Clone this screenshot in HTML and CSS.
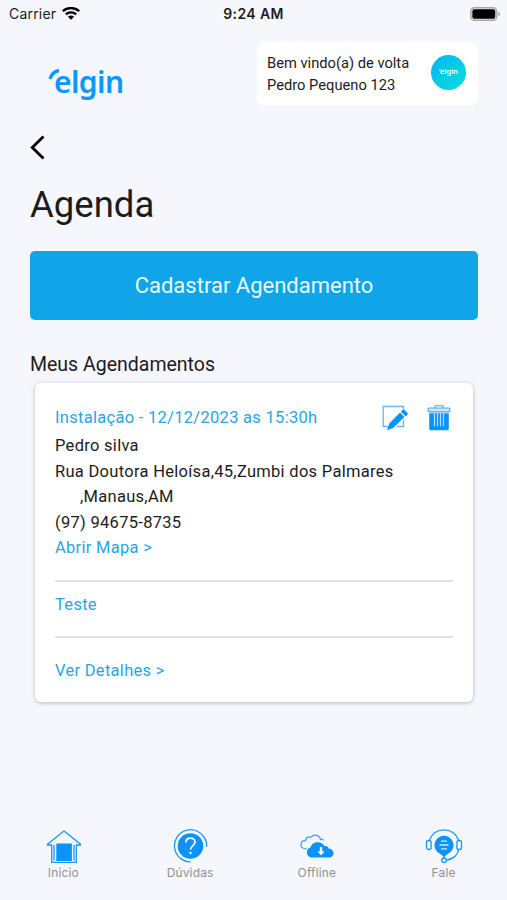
FILE: index.html
```html
<!DOCTYPE html>
<html lang="pt-br">
<head>
	<meta charset="utf-8">
	<title>Agenda</title>
	<link rel="stylesheet" href="styles.css">
</head>
<body>
	<div class="app">
		<div class="status">
			<div class="carrier">
				<span>Carrier</span>
				<svg width="18" height="14" viewBox="0 0 18 14" fill="none" stroke="#000" stroke-width="2.4">
					<path d="M.8 4.200C5.3 0 12.700 0 17.200 4.200"/>
					<path d="M3.800 7.400c2.900-2.700 7.500-2.700 10.400 0"/>
					<path d="M9 12.800L5.900 9.700c1.700-1.600 4.500-1.600 6.200 0z" fill="#000" stroke="none"/>
				</svg>
			</div>
			<span class="time">9:24 AM</span>
			<svg class="battery" width="31" height="14" viewBox="0 0 31 14">
				<rect x=".8" y=".6" width="26" height="12.8" rx="3.6" fill="#d8d8da" stroke="#a6a6a9" stroke-width="1.2"/>
				<rect x="2.4" y="2.3" width="22.8" height="9.4" rx="2" fill="#000"/>
				<path d="M28.3 4.7c2.2.7 2.2 3.9 0 4.6z" fill="#a6a6a9"/>
			</svg>
		</div>
		<div class="header">
			<div class="logo">
				<svg width="12" height="12" viewBox="0 0 12 12" fill="none" stroke="#0c98fd" stroke-width="3.400">
					<path d="M2.200 11C3 7 6.500 3.500 11 2.500"/>
				</svg>
				<span>elgin</span>
			</div>
			<div class="welcome">
				<p>Bem vindo(a) de volta<br>Pedro Pequeno 123</p>
				<div class="avatar">&#8217;elgin</div>
			</div>
		</div>
		<div class="content">
			<svg class="back" width="16" height="26" viewBox="0 0 16 26" fill="none" stroke="#000" stroke-width="2.8">
				<path d="M13.500 1.500L2.300 12.500l11.200 11"/>
			</svg>
			<h1>Agenda</h1>
			<button class="cadastrar">Cadastrar Agendamento</button>
			<h2>Meus Agendamentos</h2>
			<div class="card">
				<div class="card-top">
					<span class="link">Instalação - 12/12/2023 as 15:30h</span>
					<div class="actions">
						<svg width="27" height="26" viewBox="0 0 27 26">
							<path d="M7 21.500H1.200V1.500h20.300V4M21.500 15v6.500H15" fill="none" stroke="#5db8fb" stroke-width="1.3"/>
							<path d="M5 25.200l2.300-6.700L18 7.600l4.400 4.400L11.500 22.800z" fill="#0c93fb"/>
							<path d="M18.800 6.700l2-2q.8-.7 1.600 0l3.200 3.200q.7.700 0 1.500l-2 2z" fill="#0c93fb"/>
						</svg>
						<svg width="24" height="26" viewBox="0 0 24 26">
							<path d="M8 3V1.600q0-1 1-1h6q1 0 1 1V3" fill="none" stroke="#5db8fb" stroke-width="1.3"/>
							<rect x="1.100" y="3" width="21.800" height="3.800" rx="1" fill="#cbe8fe" stroke="#3daafb" stroke-width="1.200"/>
							<path d="M2.200 8.300h19.600v15.500q0 1.400-1.400 1.400H3.600q-1.400 0-1.400-1.400z" fill="#0c93fb"/>
							<path d="M7.500 8.300v13M10.500 8.300v13M13.500 8.300v13M16.500 8.300v13" stroke="#b5defd" stroke-width="1.200"/>
						</svg>
					</div>
				</div>
				<p>Pedro silva</p>
				<p>Rua Doutora Heloísa,45,Zumbi dos Palmares</p>
				<p class="city">,Manaus,AM</p>
				<p>(97) 94675-8735</p>
				<p class="link">Abrir Mapa &gt;</p>
				<hr>
				<p class="link">Teste</p>
				<hr class="second">
				<p class="link">Ver Detalhes &gt;</p>
			</div>
		</div>
		<div class="tabs">
			<div class="tab">
				<svg width="36" height="36" viewBox="0 0 36 36" fill="none" stroke="#1597fb" stroke-width="1.300">
					<path d="M2.500 16.300L19 3.100l16.500 13.200v.7h-4.200v17.300H6.700V17H2.500z"/>
					<path d="M9 17v15.500M29 17v15.500"/>
					<path d="M11.300 15.500h15.600V33H11.300z" fill="#0c93fb" stroke="none"/>
				</svg>
				<span>Inicio</span>
			</div>
			<div class="tab">
				<svg width="36" height="36" viewBox="0 0 36 36" fill="none" stroke="#1597fb" stroke-width="1.300">
					<circle cx="18.500" cy="18" r="12.800" fill="#0c93fb" stroke="none"/>
					<path d="M7.500 6A16.300 16.300 0 0 1 34.800 18.700"/>
					<path d="M18.500 34A16.200 16.200 0 0 1 7.500 6"/>
					<path d="M14 14.500c0-5.800 9-5.600 9-.4 0 3.900-4.500 3.600-4.500 7.400" stroke="#fff" stroke-width="1.700"/>
					<circle cx="18.500" cy="25" r="1.200" fill="#fff" stroke="none"/>
				</svg>
				<span>Dúvidas</span>
			</div>
			<div class="tab">
				<svg width="36" height="36" viewBox="0 0 36 36" fill="none" stroke="#39a7fb" stroke-width="1.300">
					<path d="M7.500 20.500C3 21 1.500 18.500 2 16c.4-2.200 2.300-3.600 4.500-3.300C6.500 9.500 9.500 8 12 9.300 15 5.500 21 7.300 21.500 11.500c1.500-.4 2.600 0 3.200.9"/>
					<path d="M13 29.500c-6 0-7.200-8.500-1.300-10.200 1-5.700 10.800-7.300 13.800-1 1.200-.5 3.500-.2 4 2.200 6.700.4 6.500 9 1 9z" fill="#0c93fb" stroke="none"/>
					<path d="M22 19v6" stroke="#fff" stroke-width="2.400"/>
					<path d="M18.500 23.500h7L22 27.300z" fill="#fff" stroke="none"/>
				</svg>
				<span>Offline</span>
			</div>
			<div class="tab">
				<svg width="38" height="36" viewBox="0 0 38 36" fill="none" stroke="#1597fb" stroke-width="1.300">
					<path d="M4.500 12C7 5.500 12.500 1.800 19 1.800S31 5.500 33.500 12M33.500 22C32.500 27.500 27.500 31.500 21.500 32"/>
					<rect x="1.500" y="12.500" width="4.600" height="9" rx="2"/>
					<rect x="31.900" y="12.500" width="4.600" height="9" rx="2"/>
					<path d="M15.500 26L19 29l3.500-3A9.500 9.500 0 1 0 15.500 26z" fill="#0c93fb" stroke="none"/>
					<path d="M16 13.200h6M14.500 17h9M16 20.800h6" stroke="#d5edff"/>
					<path d="M19 28v3"/>
					<circle cx="19" cy="32.300" r="2.300" fill="#f5f7fc"/>
				</svg>
				<span>Fale</span>
			</div>
		</div>
	</div>
</body>
</html>
```
FILE: styles.css
```css
*{
	box-sizing: border-box;
}
body{
	margin: 0;
	background-color: #f5f7fc;
	font-family: Roboto, "Liberation Sans", sans-serif;
	color: #1c1c1e;
}
p,h1,h2{
	margin: 0;
	font-weight: 400;
}
svg{
	display: block;
	flex-shrink: 0;
}
.app{
	display: flex;
	flex-direction: column;
	height: 900px;
}
.status{
	display: grid;
	grid-template-columns: 1fr auto 1fr;
	align-items: center;
	height: 27px;
	padding: 0 6px 0 9px;
	font-family: Inter, sans-serif;
	font-size: 14px;
}
.carrier{
	display: flex;
	align-items: center;
	gap: 6px;
	letter-spacing: .2px;
}
.time{
	margin-right: 3px;
	font-weight: 600;
	letter-spacing: .4px;
}
.battery{
	justify-self: end;
}
.header{
	display: flex;
	justify-content: space-between;
	padding: 15px 29px 0 48px;
}
.logo{
	display: flex;
	padding-top: 26px;
	color: #0c98fd;
	font-family: "Noto Sans", sans-serif;
	font-size: 30px;
	font-weight: 600;
	letter-spacing: -.6px;
	line-height: 28px;
}
.logo span{
	margin-left: -6px;
}
.welcome{
	display: flex;
	align-items: center;
	justify-content: space-between;
	width: 221px;
	height: 64px;
	padding: 0 12px 4px 10px;
	border-radius: 8px;
	background-color: #fff;
	font-size: 14.7px;
	line-height: 22px;
}
.welcome p{
	padding-top: 4px;
}
.avatar{
	width: 35px;
	height: 35px;
	border-radius: 50%;
	background: linear-gradient(135deg, #00b4f5, #0cdfd8);
	color: #fff;
	font-family: "Noto Sans", sans-serif;
	font-size: 7.5px;
	font-weight: 600;
	line-height: 33px;
	text-align: center;
}
.content{
	padding: 29px 29px 0 30px;
}
h1{
	margin-top: 22px;
	font-size: 36.5px;
	line-height: 44px;
}
.cadastrar{
	display: block;
	width: 100%;
	height: 69px;
	margin-top: 24px;
	padding: 0;
	border: none;
	border-radius: 5px;
	background-color: #10a5e9;
	color: #e6f9ff;
	font-family: inherit;
	font-size: 22px;
}
h2{
	margin-top: 31px;
	font-size: 19.5px;
	line-height: 28px;
}
.card{
	height: 319px;
	margin: 4px 5px 0;
	padding: 22px 20px 0 20px;
	border-radius: 6px;
	background-color: #fff;
	box-shadow: 0 1px 4px rgba(0, 0, 0, .25);
	font-size: 16.5px;
	letter-spacing: .29px;
	line-height: 25.6px;
}
.card-top{
	display: flex;
	justify-content: space-between;
	height: 28px;
	line-height: 25px;
}
.actions{
	display: flex;
	gap: 18px;
	padding-right: 2px;
}
.link{
	color: #2ba5e2;
}
.city{
	padding-left: 25px;
}
hr{
	height: 2px;
	margin: 19px 0 10px;
	border: none;
	background-color: #e2e2e4;
}
.second{
	margin: 18px 0 20px;
}
.tabs{
	display: grid;
	grid-template-columns: repeat(4, 1fr);
	height: 72px;
	margin-top: auto;
}
.tab{
	display: flex;
	flex-direction: column;
	align-items: center;
	color: #919296;
	font-family: Inter, sans-serif;
	font-size: 12px;
	letter-spacing: .15px;
	line-height: 18px;
}
```
